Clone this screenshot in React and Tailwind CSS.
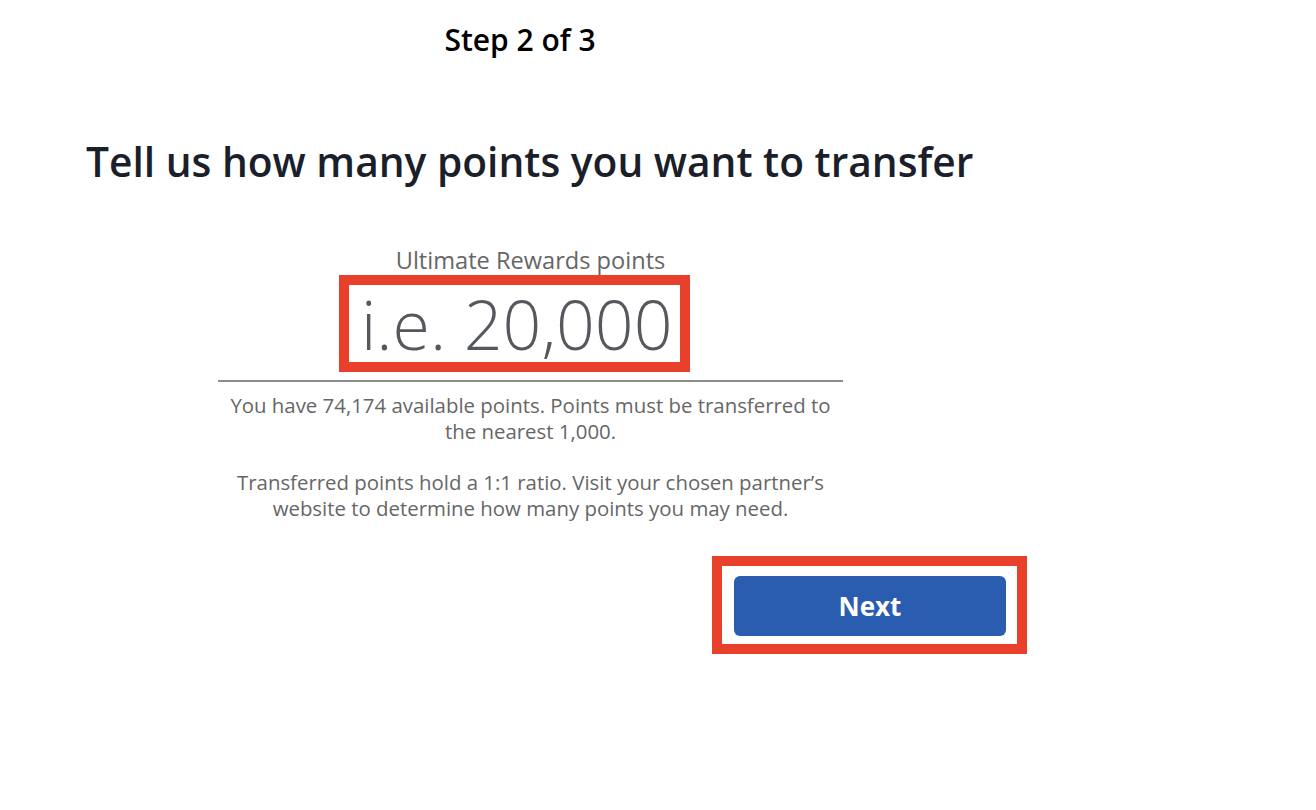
import React, { useState } from 'react';

const TransferPoints = () => {
  const [amount, setAmount] = useState('');

  return (
    <div className="min-h-[810px] bg-white text-[#1b1f2a]" style={{ fontFamily: '"Open Sans", "Liberation Sans", sans-serif' }}>
      <div className="w-[868px] ml-[86px] pt-[21px]">
        <p className="text-center text-[30px] leading-[38px] font-semibold text-black">Step 2 of 3</p>
        <h1 className="mt-[75px] text-[40.7px] leading-[54px] font-semibold whitespace-nowrap">
          Tell us how many points you want to transfer
        </h1>
      </div>

      <div className="w-[625px] ml-[218px] mt-[57px]">
        <label htmlFor="points" className="block text-center text-[23.6px] leading-[30px] text-[#666]">
          Ultimate Rewards points
        </label>
        <div className="ml-[121px] w-[351px] h-[97px] border-[10px] border-[#e8402a]">
          <input
            id="points"
            value={amount}
            onChange={(e) => setAmount(e.target.value)}
            placeholder="i.e. 20,000"
            className="w-full h-[77px] pl-[12px] text-[68px] leading-[77px] font-light text-[#55595d] placeholder:text-[#55595d] outline-none bg-transparent"
          />
        </div>
        <div className="mt-[8px] h-[2px] bg-[#8c8c8c]"></div>
        <div className="px-[6px] text-center text-[20.4px] leading-[26px] text-[#666]">
          <p className="mt-[10px]">
            You have 74,174 available points. Points must be transferred to the nearest 1,000.
          </p>
          <p className="mt-[25px]">
            Transferred points hold a 1:1 ratio. Visit your chosen partner’s website to determine how many points you may need.
          </p>
        </div>
      </div>

      <div className="ml-[712px] mt-[35px] w-[315px] h-[98px] border-[10px] border-[#e8402a] px-[12px] py-[10px]">
        <button className="w-[272px] h-[60px] rounded-[6px] bg-[#2a5db0] text-white text-[26px] font-bold">
          Next
        </button>
      </div>
    </div>
  );
};

export default function App() {
  return <TransferPoints />;
}
